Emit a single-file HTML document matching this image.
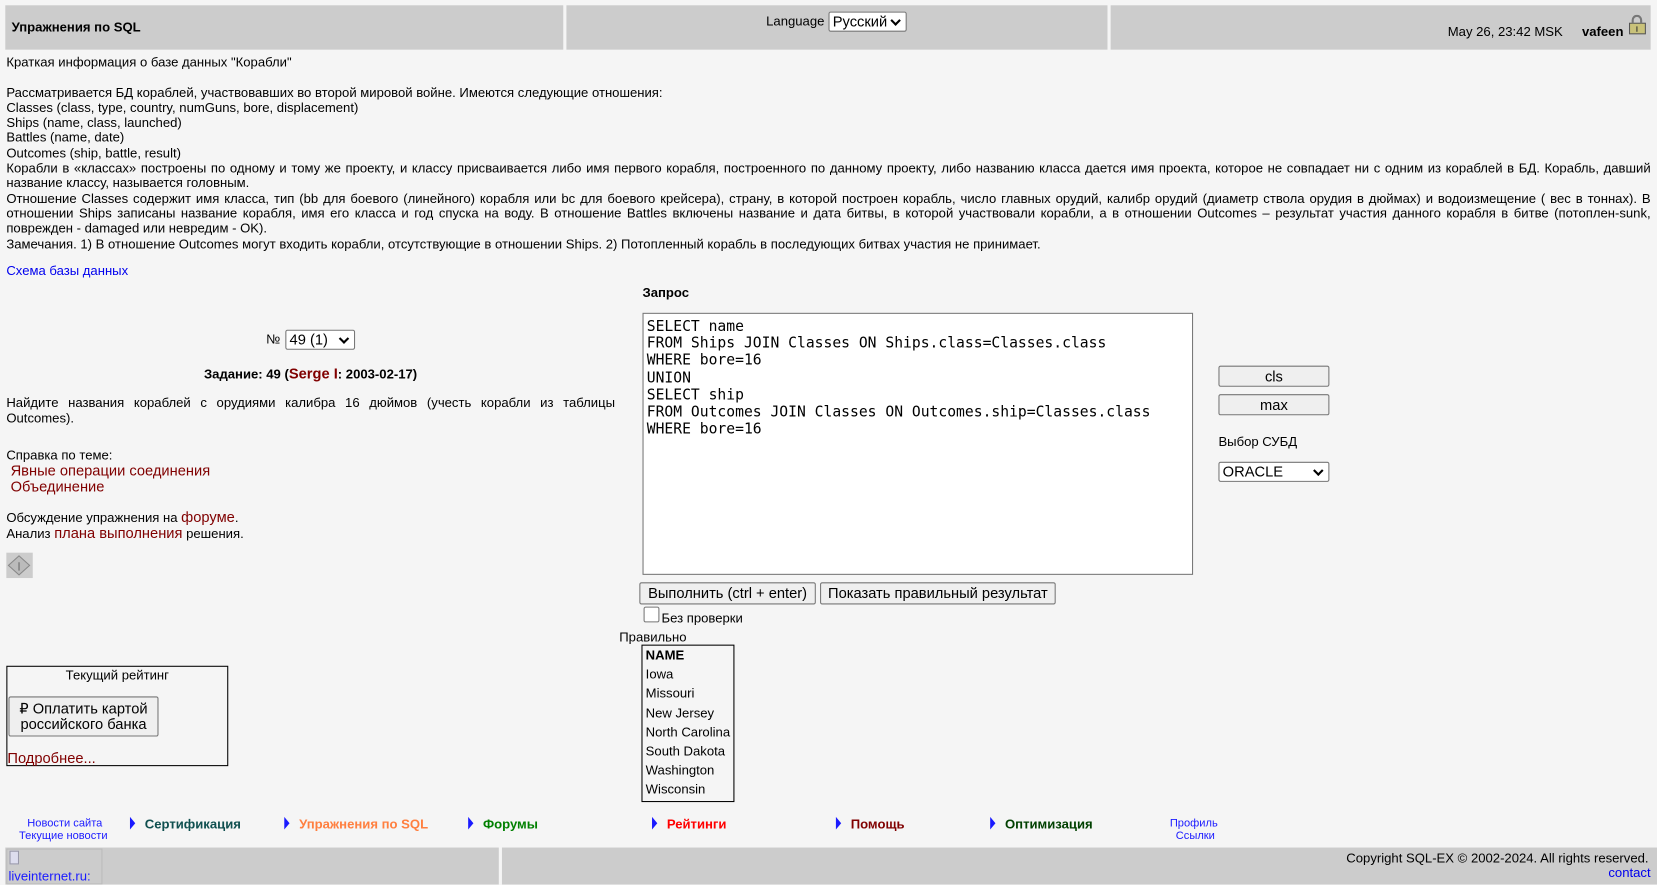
<!DOCTYPE html>
<html><head><meta charset="utf-8"><style>
html,body{margin:0;padding:0}
body{background:#f5f5f5;width:1657px;height:884px;overflow:hidden}
#w{position:absolute;left:0;top:0;width:1568px;height:837px;transform:scale(1.05676);transform-origin:0 0;font-family:"Liberation Sans",Arial,sans-serif;font-size:12.4px;color:#000}
.a{position:absolute;white-space:nowrap}
.hd{position:absolute;top:5px;height:42px;background:#ccc}
.r{color:#800000;font-size:13.9px}
.btn{position:absolute;background:#efefef;border:1px solid #767676;border-radius:2px;font-size:13.9px;text-align:center;box-sizing:border-box;line-height:18px}
.sel{position:absolute;background:#fff;border:1px solid #767676;border-radius:2px;font-size:13.9px;box-sizing:border-box;padding-left:3px;line-height:17px}
.sel:after{content:"";position:absolute;right:6px;top:4px;width:5px;height:5px;border-right:2px solid #000;border-bottom:2px solid #000;transform:rotate(45deg)}
.nav{position:absolute;top:773px;font-weight:bold;font-size:12.4px}
.tri{position:absolute;top:773px;width:0;height:0;border-left:5px solid #1a1aff;border-top:6px solid transparent;border-bottom:6px solid transparent}
</style></head><body><div id="w">
<div class="hd" style="left:5px;width:528px"></div>
<div class="hd" style="left:536px;width:512px"></div>
<div class="hd" style="left:1051px;width:511px"></div>
<div class="a" style="left:11px;top:19px;font-weight:bold">Упражнения по SQL</div>
<div class="a" style="left:725px;top:13px">Language</div>
<div class="sel" style="left:784px;top:11px;width:74px;height:19px">Русский</div>
<div class="a" style="left:1370px;top:23px">May 26, 23:42 MSK</div>
<div class="a" style="left:1497px;top:23px;font-weight:bold">vafeen</div>
<svg class="a" style="left:1539px;top:14px" width="20" height="20"><rect x="3" y="8" width="15" height="10" fill="#c9c27a" stroke="#555"/><path d="M6 8V5a4 4 0 0 1 8 0v3" fill="none" stroke="#777" stroke-width="2"/><line x1="10" y1="11" x2="10" y2="16" stroke="#333"/></svg>
<div class="a" style="left:6px;top:52px;line-height:14.3px;white-space:normal;width:1556px">Краткая информация о базе данных "Корабли"<br><br>Рассматривается БД кораблей, участвовавших во второй мировой войне. Имеются следующие отношения:<br>Classes (class, type, country, numGuns, bore, displacement)<br>Ships (name, class, launched)<br>Battles (name, date)<br>Outcomes (ship, battle, result)<br><div style="text-align:justify">Корабли в «классах» построены по одному и тому же проекту, и классу присваивается либо имя первого корабля, построенного по данному проекту, либо названию класса дается имя проекта, которое не совпадает ни с одним из кораблей в БД. Корабль, давший название классу, называется головным.<br>Отношение Classes содержит имя класса, тип (bb для боевого (линейного) корабля или bc для боевого крейсера), страну, в которой построен корабль, число главных орудий, калибр орудий (диаметр ствола орудия в дюймах) и водоизмещение ( вес в тоннах). В отношении Ships записаны название корабля, имя его класса и год спуска на воду. В отношение Battles включены название и дата битвы, в которой участвовали корабли, а в отношении Outcomes – результат участия данного корабля в битве (потоплен-sunk, поврежден - damaged или невредим - OK).</div>Замечания. 1) В отношение Outcomes могут входить корабли, отсутствующие в отношении Ships. 2) Потопленный корабль в последующих битвах участия не принимает.</div>
<div class="a" style="left:6px;top:249px;color:#0000ee">Схема базы данных</div>
<div class="a" style="left:252px;top:314px">№</div>
<div class="sel" style="left:270px;top:312px;width:66px;height:19px">49 (1)</div>
<div class="a" style="left:193px;top:345px;font-weight:bold">Задание: 49 (<span class="r">Serge I</span>: 2003-02-17)</div>
<div class="a" style="left:6px;top:374px;line-height:14.5px;white-space:normal;width:576px;text-align:justify;text-align-last:left">Найдите названия кораблей с орудиями калибра 16 дюймов (учесть корабли из таблицы Outcomes).</div>
<div class="a" style="left:6px;top:424px">Справка по теме:</div>
<div class="a r" style="left:10px;top:437px">Явные операции соединения</div>
<div class="a r" style="left:10px;top:452px">Объединение</div>
<div class="a" style="left:6px;top:481px">Обсуждение упражнения на <span class="r">форуме</span>.</div>
<div class="a" style="left:6px;top:496px">Анализ <span class="r">плана выполнения</span> решения.</div>
<div class="a" style="left:6px;top:523px;width:25px;height:24px;background:#ccc"><svg width="25" height="24"><path d="M12 3L22 12L12 21L2 12Z" fill="#bbb" stroke="#888"/><line x1="12" y1="9" x2="12" y2="17" stroke="#666"/></svg></div>
<div class="a" style="left:6px;top:630px;width:210px;height:95px;border:1px solid #000;box-sizing:border-box">
<div style="text-align:center;margin-top:1px">Текущий рейтинг</div>
<div class="btn" style="left:1px;top:28px;width:142px;height:38px;line-height:15px;padding-top:3px;white-space:normal">₽ Оплатить картой российского банка</div>
<div class="a r" style="left:0;top:78px">Подробнее...</div></div>
<div class="a" style="left:608px;top:270px;font-weight:bold">Запрос</div>
<div class="a" style="left:608px;top:296px;width:521px;height:248px;background:#fff;border:1px solid #767676;box-sizing:border-box;font-family:'DejaVu Sans Mono',monospace;font-size:13.9px;line-height:16.2px;padding:4px 3px;white-space:pre">SELECT name
FROM Ships JOIN Classes ON Ships.class=Classes.class
WHERE bore=16
UNION
SELECT ship
FROM Outcomes JOIN Classes ON Outcomes.ship=Classes.class
WHERE bore=16</div>
<div class="btn" style="left:1153px;top:346px;width:105px;height:20px">cls</div>
<div class="btn" style="left:1153px;top:373px;width:105px;height:20px">max</div>
<div class="a" style="left:1153px;top:411px">Выбор СУБД</div>
<div class="sel" style="left:1153px;top:437px;width:105px;height:19px">ORACLE</div>
<div class="btn" style="left:605px;top:551px;width:167px;height:21px">Выполнить (ctrl + enter)</div>
<div class="btn" style="left:776px;top:551px;width:223px;height:21px">Показать правильный результат</div>
<div class="a" style="left:609px;top:574px;width:13px;height:13px;border:1px solid #767676;border-radius:2px;background:#fff"></div>
<div class="a" style="left:626px;top:578px">Без проверки</div>
<div class="a" style="left:586px;top:596px">Правильно</div>
<div class="a" style="left:607px;top:610px;width:88px;height:149px;border:1px solid #000;box-sizing:border-box;line-height:18.2px;padding-left:3px">
<b>NAME</b><br>Iowa<br>Missouri<br>New Jersey<br>North Carolina<br>South Dakota<br>Washington<br>Wisconsin</div>
<div class="a" style="left:18px;top:773px;font-size:10.5px;color:#1a1aff;text-align:center;line-height:12px">&nbsp;Новости сайта<br>Текущие новости</div>
<div class="tri" style="left:123px"></div><div class="nav" style="left:137px;color:#0f4f4f">Сертификация</div>
<div class="tri" style="left:269px"></div><div class="nav" style="left:283px;color:#ff7f3f">Упражнения по SQL</div>
<div class="tri" style="left:443px"></div><div class="nav" style="left:457px;color:#008000">Форумы</div>
<div class="tri" style="left:617px"></div><div class="nav" style="left:631px;color:#ff0000">Рейтинги</div>
<div class="tri" style="left:791px"></div><div class="nav" style="left:805px;color:#800000">Помощь</div>
<div class="tri" style="left:937px"></div><div class="nav" style="left:951px;color:#004000">Оптимизация</div>
<div class="a" style="left:1107px;top:773px;font-size:10.5px;color:#1a1aff;text-align:center;line-height:12px">Профиль<br>&nbsp;Ссылки</div>
<div class="a" style="left:5px;top:802px;width:467px;height:35px;background:#ccc"></div>
<div class="a" style="left:475px;top:802px;width:1093px;height:35px;background:#ccc"></div>
<div class="a" style="left:6px;top:803px;width:91px;height:34px;border:1px solid #bbb;box-sizing:border-box"></div>
<div class="a" style="left:9px;top:805px;width:7px;height:11px;background:#dde;border:1px solid #99a"></div>
<div class="a" style="left:8px;top:822px;color:#1a1aff">liveinternet.ru:</div>
<div class="a" style="left:1274px;top:805px">Copyright SQL-EX © 2002-2024. All rights reserved.</div>
<div class="a" style="left:1522px;top:819px;color:#0000ee">contact</div>
</div></body></html>
